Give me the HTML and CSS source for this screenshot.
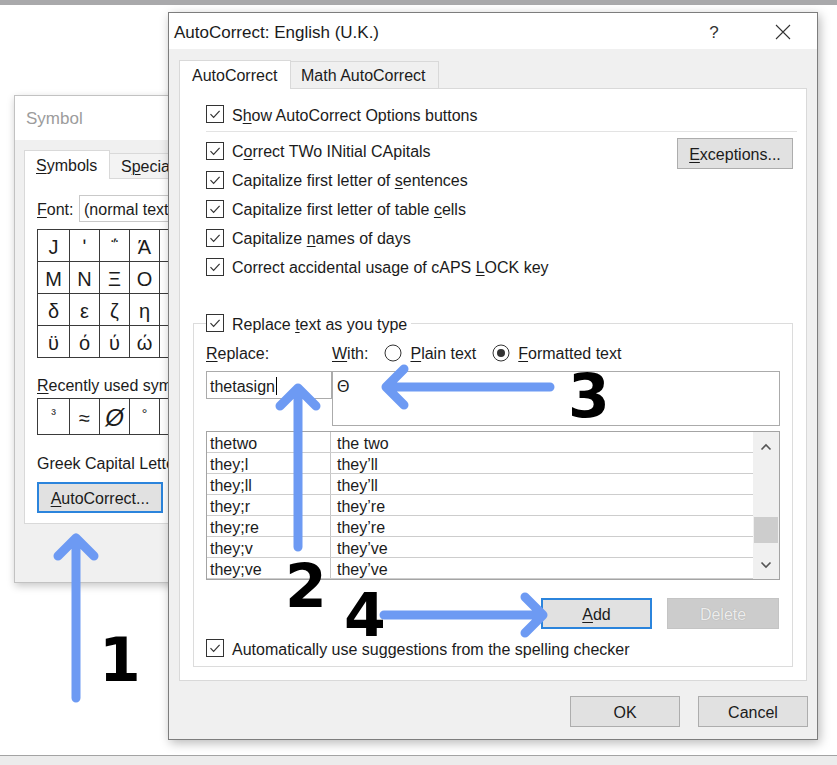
FILE: index.html
```html
<!DOCTYPE html>
<html>
<head>
<meta charset="utf-8">
<title>AutoCorrect</title>
<link rel="stylesheet" href="styles.css">
</head>
<body>
<div class="desk">
  <div class="topbar"></div>
  <div class="desk-area"></div>
  <div class="bottombar"></div>

  <section class="win win-sym">
    <div class="sym-title">Symbol</div>
    <div class="sym-body">
      <div class="tabs">
        <div class="tab tab-on sym-tab-on"><u>S</u>ymbols</div>
        <div class="tab sym-tab">S<u>p</u>ecia</div>
      </div>
      <div class="sym-panel">
        <div class="font-row"><span class="font-label"><u>F</u>ont:</span><div class="combo">(normal text</div></div>
        <div class="sym-grid">
          <span>J</span><span>ʹ</span><span>΅</span><span>Ά</span><span></span>
          <span>Μ</span><span>Ν</span><span>Ξ</span><span>Ο</span><span></span>
          <span>δ</span><span>ε</span><span>ζ</span><span>η</span><span></span>
          <span>ϋ</span><span>ό</span><span>ύ</span><span>ώ</span><span></span>
        </div>
        <div class="sym-label recent-label"><u>R</u>ecently used sym</div>
        <div class="sym-grid recent">
          <span class="sup">³</span><span>≈</span><span class="big">Ø</span><span class="sup">°</span><span></span>
        </div>
        <div class="sym-label greek">Greek Capital Lette</div>
        <div class="btn btn-focus sym-ac"><u>A</u>utoCorrect...</div>
      </div>
    </div>
  </section>

  <section class="win win-ac">
    <div class="ac-title">
      <span class="ac-title-text">AutoCorrect: English (U.K.)</span>
      <span class="help">?</span>
      <svg class="close" viewBox="0 0 16 16"><path d="M1 1L15 15M15 1L1 15" stroke="#333" stroke-width="1.1" fill="none"/></svg>
    </div>
    <div class="ac-body">
      <div class="tabs">
        <div class="tab tab-on ac-tab-on">AutoCorrect</div>
        <div class="tab ac-tab">Math AutoCorrect</div>
      </div>
      <div class="ac-panel">
        <div class="row show-row">
          <svg class="cb" viewBox="0 0 18 18"><rect x=".5" y=".5" width="17" height="17" fill="#fff" stroke="#333"/><path d="M4.5 9.2L7.6 12.3L13.6 5.8" fill="none" stroke="#333" stroke-width="1.2"/></svg>
          <span class="tx">S<u>h</u>ow AutoCorrect Options buttons</span>
        </div>
        <div class="sep"></div>
        <div class="options">
          <div class="opt-list">
            <div class="row">
              <svg class="cb" viewBox="0 0 18 18"><rect x=".5" y=".5" width="17" height="17" fill="#fff" stroke="#333"/><path d="M4.5 9.2L7.6 12.3L13.6 5.8" fill="none" stroke="#333" stroke-width="1.2"/></svg>
              <span class="tx">C<u>o</u>rrect TWo INitial CApitals</span>
            </div>
            <div class="row">
              <svg class="cb" viewBox="0 0 18 18"><rect x=".5" y=".5" width="17" height="17" fill="#fff" stroke="#333"/><path d="M4.5 9.2L7.6 12.3L13.6 5.8" fill="none" stroke="#333" stroke-width="1.2"/></svg>
              <span class="tx">Capitalize first letter of <u>s</u>entences</span>
            </div>
            <div class="row">
              <svg class="cb" viewBox="0 0 18 18"><rect x=".5" y=".5" width="17" height="17" fill="#fff" stroke="#333"/><path d="M4.5 9.2L7.6 12.3L13.6 5.8" fill="none" stroke="#333" stroke-width="1.2"/></svg>
              <span class="tx">Capitalize first letter of table <u>c</u>ells</span>
            </div>
            <div class="row">
              <svg class="cb" viewBox="0 0 18 18"><rect x=".5" y=".5" width="17" height="17" fill="#fff" stroke="#333"/><path d="M4.5 9.2L7.6 12.3L13.6 5.8" fill="none" stroke="#333" stroke-width="1.2"/></svg>
              <span class="tx">Capitalize <u>n</u>ames of days</span>
            </div>
            <div class="row">
              <svg class="cb" viewBox="0 0 18 18"><rect x=".5" y=".5" width="17" height="17" fill="#fff" stroke="#333"/><path d="M4.5 9.2L7.6 12.3L13.6 5.8" fill="none" stroke="#333" stroke-width="1.2"/></svg>
              <span class="tx">Correct accidental usage of cAPS <u>L</u>OCK key</span>
            </div>
          </div>
          <div class="btn exc"><u>E</u>xceptions...</div>
        </div>

        <fieldset class="fs">
          <legend class="legend">
            <span class="row legend-row">
              <svg class="cb" viewBox="0 0 18 18"><rect x=".5" y=".5" width="17" height="17" fill="#fff" stroke="#333"/><path d="M4.5 9.2L7.6 12.3L13.6 5.8" fill="none" stroke="#333" stroke-width="1.2"/></svg>
              <span class="tx">Replace <u>t</u>ext as you type</span>
            </span>
          </legend>
          <div class="with-row">
            <span class="lbl-replace"><u>R</u>eplace:</span>
            <span class="lbl-with"><u>W</u>ith:</span>
            <span class="radio-opt">
              <svg class="rb" viewBox="0 0 18 18"><circle cx="9" cy="9" r="8" fill="#fff" stroke="#333"/></svg>
              <span class="tx"><u>P</u>lain text</span>
            </span>
            <span class="radio-opt">
              <svg class="rb" viewBox="0 0 18 18"><circle cx="9" cy="9" r="8" fill="#fff" stroke="#333"/><circle cx="9" cy="9" r="4" fill="#333"/></svg>
              <span class="tx"><u>F</u>ormatted text</span>
            </span>
          </div>
          <div class="inputs">
            <div class="in-replace">thetasign<span class="caret"></span></div>
            <div class="in-with">Θ</div>
          </div>
          <div class="list">
            <div class="list-rows">
              <div class="lr"><span class="c1">thetwo</span><span class="c2">the two</span></div>
              <div class="lr"><span class="c1">they;l</span><span class="c2">they’ll</span></div>
              <div class="lr"><span class="c1">they;ll</span><span class="c2">they’ll</span></div>
              <div class="lr"><span class="c1">they;r</span><span class="c2">they’re</span></div>
              <div class="lr"><span class="c1">they;re</span><span class="c2">they’re</span></div>
              <div class="lr"><span class="c1">they;v</span><span class="c2">they’ve</span></div>
              <div class="lr"><span class="c1">they;ve</span><span class="c2">they’ve</span></div>
            </div>
            <div class="scroll">
              <div class="sb-btn"><svg viewBox="0 0 12 8" class="chev"><path d="M1.5 6.5L6 2L10.5 6.5" fill="none" stroke="#555" stroke-width="1.6"/></svg></div>
              <div class="sb-track"><div class="sb-thumb"></div></div>
              <div class="sb-btn"><svg viewBox="0 0 12 8" class="chev"><path d="M1.5 1.5L6 6L10.5 1.5" fill="none" stroke="#555" stroke-width="1.6"/></svg></div>
            </div>
          </div>
          <div class="btn-row">
            <div class="btn btn-focus add"><u>A</u>dd</div>
            <div class="btn btn-dis del">Delete</div>
          </div>
          <div class="row auto-row">
            <svg class="cb" viewBox="0 0 18 18"><rect x=".5" y=".5" width="17" height="17" fill="#fff" stroke="#333"/><path d="M4.5 9.2L7.6 12.3L13.6 5.8" fill="none" stroke="#333" stroke-width="1.2"/></svg>
            <span class="tx">Automatically use su<u>g</u>gestions from the spelling checker</span>
          </div>
        </fieldset>
      </div>
      <div class="ac-foot">
        <div class="btn foot-btn">OK</div>
        <div class="btn foot-btn">Cancel</div>
      </div>
    </div>
  </section>

  <svg class="arrows" viewBox="0 0 837 765">
    <g fill="none" stroke="#6d9af3" stroke-width="9" stroke-linecap="round" stroke-linejoin="round">
      <path d="M76 698V538M58 556L76 538L94 556"/>
      <path d="M298 547V388M280 406L298 388L316 406"/>
      <path d="M550 387H386M404 369L386 387L404 405"/>
      <path d="M384 615H543M525 597L543 615L525 633"/>
    </g>
  </svg>
  <div class="num n1">1</div>
  <div class="num n2">2</div>
  <div class="num n3">3</div>
  <div class="num n4">4</div>
</div>
</body>
</html>
```

FILE: styles.css
```css
* { box-sizing: border-box; }

html, body {
  margin: 0;
  background: #ffffff;
}

body {
  font-family: "Liberation Sans", Arial, sans-serif;
  font-size: 16px;
  color: #1b1b1b;
}

u { text-decoration-thickness: 1px; text-underline-offset: 2px; }

.desk {
  position: relative;
  width: 837px;
  height: 765px;
  overflow: hidden;
  display: flex;
  flex-direction: column;
}

.topbar { height: 5px; background: #a9a9ab; flex: none; }
.desk-area { flex: 1; }
.bottombar { height: 10px; flex: none; background: #ececec; border-top: 1px solid #a3a3a3; }

.win { position: absolute; }

/* ---------- Symbol window ---------- */
.win-sym {
  left: 14px;
  top: 95px;
  width: 200px;
  height: 488px;
  background: #f0f0f0;
  border: 1px solid #c2c2c2;
  box-shadow: 1px 3px 8px rgba(0, 0, 0, 0.22);
}

.sym-title {
  height: 44px;
  background: #fff;
  color: #9c9c9c;
  font-size: 17px;
  line-height: 44px;
  padding: 1px 0 0 11px;
}

.sym-body { padding: 10px 0 0 9px; }

.tabs { display: flex; align-items: flex-end; }

.tab {
  border: 1px solid #d9d9d9;
  border-bottom: none;
  white-space: nowrap;
  display: flex;
  align-items: center;
  padding-top: 2px;
  flex: none;
}

.tab-on {
  background: #fff;
  position: relative;
  margin-bottom: -1px;
}

.sym-tab-on { width: 86px; height: 29px; padding-left: 11px; }
.sym-tab { height: 25px; padding-left: 11px; width: 90px; background: #f3f3f3; border-left: none; }

.sym-panel {
  width: 180px;
  height: 346px;
  background: #fff;
  border: 1px solid #d9d9d9;
  padding: 16px 0 0 12px;
  white-space: nowrap;
}

.font-row { display: flex; align-items: center; height: 27px; }
.font-label { width: 42px; flex: none; padding-top: 2px; }
.combo {
  width: 120px;
  height: 27px;
  border: 1px solid #c9c9c9;
  background: #fff;
  display: flex;
  align-items: center;
  padding: 2px 0 0 4px;
  flex: none;
}

.sym-grid {
  margin-top: 7px;
  display: grid;
  grid-template-columns: 32px 30px 30px 30px 30px;
  grid-auto-rows: 32px;
  border-top: 1px solid #3a3a3a;
  border-left: 1px solid #3a3a3a;
  width: 153px;
}

.sym-grid span {
  border-right: 1px solid #3a3a3a;
  border-bottom: 1px solid #3a3a3a;
  display: flex;
  align-items: center;
  justify-content: center;
  font-size: 20px;
  padding-top: 3px;
}

.sym-grid.recent { margin-top: 4px; grid-auto-rows: 36px; }
.sym-grid.recent .sup { font-size: 14px; align-items: flex-start; padding-top: 7px; }
.sym-grid.recent .big { font-size: 24px; font-style: italic; }

.sym-label { height: 20px; line-height: 20px; padding-top: 2px; }
.recent-label { margin-top: 16px; }
.greek { margin-top: 17px; }

.btn {
  background: #e1e1e1;
  border: 1px solid #adadad;
  display: flex;
  align-items: center;
  justify-content: center;
  height: 31px;
  white-space: nowrap;
  padding-top: 2px;
}

.btn-focus { border: 2px solid #2b84dc; }
.btn-dis { background: #cccccc; border-color: #c4c4c4; color: #ededed; text-shadow: 0 0 1px #9a9a9a; }

.sym-ac { margin-top: 10px; width: 126px; }

/* ---------- AutoCorrect window ---------- */
.win-ac {
  left: 168px;
  top: 12px;
  width: 650px;
  height: 728px;
  background: #f0f0f0;
  border: 1px solid #7d7d7d;
  box-shadow: 2px 3px 10px rgba(0, 0, 0, 0.28);
  display: flex;
  flex-direction: column;
}

.ac-title {
  height: 36px;
  background: #fff;
  display: flex;
  align-items: center;
  padding: 3px 0 0 5px;
  font-size: 17px;
  flex: none;
}

.ac-title-text { flex: 1; }
.help { width: 20px; text-align: center; color: #333; margin-right: 51px; }
.close { width: 16px; height: 16px; margin-right: 26px; margin-bottom: 2px; }

.ac-body { padding: 11px 9px 0 10px; }

.ac-tab-on { width: 112px; height: 29px; padding-left: 12px; }
.ac-tab { width: 148px; height: 27px; padding-left: 10px; border-left: none; background: #f0f0f0; }

.ac-panel {
  width: 628px;
  height: 593px;
  background: #fff;
  border: 1px solid #d9d9d9;
  padding: 15px 0 0 13px;
}

.row { display: flex; align-items: center; gap: 8px; }
.tx { padding-top: 3px; white-space: nowrap; }
.cb { width: 18px; height: 18px; flex: none; }
.rb { width: 18px; height: 18px; flex: none; }

.show-row { height: 20px; margin-left: 13px; }

.sep {
  margin: 7px 0 5px 13px;
  width: 591px;
  height: 1px;
  background: #e3e3e3;
}

.options { display: flex; margin-left: 13px; width: 587px; }
.opt-list { flex: 1; margin-top: -1px; }
.opt-list .row { height: 29px; }
.exc { width: 116px; margin-top: 1px; }

.fs {
  margin: 32px 0 0 0;
  padding: 0 12px 8px 12px;
  border: 1px solid #dcdcdc;
  width: 600px;
  min-width: 0;
}

.legend { padding: 0 4px 0 0; }
.legend-row { height: 20px; }

.with-row { display: flex; align-items: center; height: 20px; margin-top: 10px; padding-top: 2px; }
.lbl-replace { width: 126px; }
.lbl-with { margin-right: 16px; }
.radio-opt { display: flex; align-items: center; gap: 8px; margin-right: 16px; }
.radio-opt .rb { margin-top: -2px; }
.radio-opt .tx { padding-top: 0; }

.inputs { display: flex; align-items: flex-start; margin-top: 8px; }
.in-replace {
  width: 126px;
  height: 28px;
  border: 1px solid #ababab;
  padding: 3px 0 0 3px;
  display: flex;
  align-items: center;
}
.caret { width: 1px; height: 18px; background: #000; margin-left: 1px; margin-top: -2px; }
.in-with {
  width: 448px;
  height: 55px;
  border: 1px solid #ababab;
  padding: 6px 0 0 4px;
  line-height: 18px;
}

.list {
  margin-top: 5px;
  width: 574px;
  height: 149px;
  border: 1px solid #a4a4a4;
  display: flex;
}

.list-rows { flex: 1; display: flex; flex-direction: column; }
.lr { display: flex; height: 21px; border-bottom: 1px solid #cdcdcd; }
.c1 {
  width: 124px;
  border-right: 1px solid #c6c6c6;
  padding: 3px 0 0 3px;
  display: flex;
  align-items: center;
}
.c2 { padding: 3px 0 0 6px; display: flex; align-items: center; }

.scroll { width: 26px; background: #f0f0f0; display: flex; flex-direction: column; }
.sb-btn { height: 29px; display: flex; align-items: center; justify-content: center; }
.chev { width: 12px; height: 8px; }
.sb-track { flex: 1; padding: 56px 1px 0 1px; }
.sb-thumb { height: 26px; background: #cdcdcd; }

.btn-row { display: flex; justify-content: flex-end; gap: 15px; margin-top: 18px; padding-right: 1px; }
.add { width: 111px; }
.del { width: 112px; }

.auto-row { height: 20px; margin-top: 9px; }

.ac-foot { display: flex; justify-content: flex-end; gap: 18px; padding: 15px 0 0 0; }
.foot-btn { width: 110px; height: 31px; }

/* ---------- annotations ---------- */
.arrows {
  position: absolute;
  left: 0;
  top: 0;
  width: 837px;
  height: 765px;
  pointer-events: none;
}

.num {
  position: absolute;
  font-family: "DejaVu Sans", sans-serif;
  font-weight: bold;
  font-size: 60px;
  line-height: 46px;
  color: #000;
}

.n1 { left: 99px; top: 637px; }
.n2 { left: 285px; top: 563px; }
.n3 { left: 568px; top: 373px; }
.n4 { left: 344px; top: 592px; }
```
